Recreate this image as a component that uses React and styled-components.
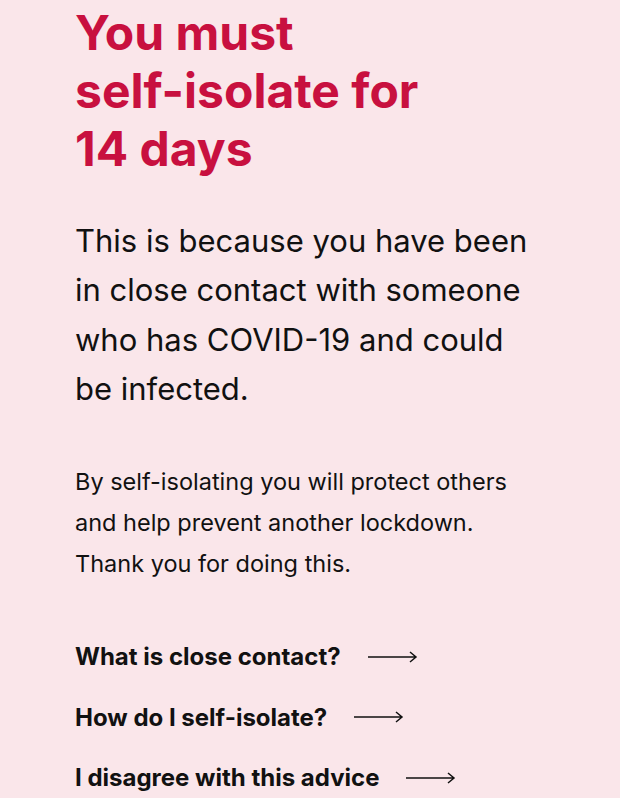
import React from "react";
import styled, { createGlobalStyle } from "styled-components";

const Global = createGlobalStyle`
  html, body { margin: 0; padding: 0; background: #fae6ea; }
  body { font-family: Inter, "Noto Sans", sans-serif; }
`;

const Page = styled.main`
  min-height: 798px;
  box-sizing: border-box;
  padding: 4px 30px 0 75px;
  background: #fae6ea;
  color: #111;
`;

const Title = styled.h1`
  margin: 0;
  font-size: 48px;
  line-height: 58px;
  font-weight: 700;
  color: #c8103f;
`;

const Lead = styled.p`
  margin: 38px 0 0;
  font-size: 31px;
  line-height: 49.3px;
  font-weight: 400;
`;

const Body = styled.p`
  margin: 48px 0 0;
  font-size: 23.5px;
  line-height: 41px;
  font-weight: 400;
`;

const Links = styled.nav`
  display: flex;
  flex-direction: column;
  gap: 19.5px;
  margin-top: 52px;
`;

const LinkRow = styled.a`
  display: flex;
  align-items: center;
  gap: 27px;
  font-size: 24px;
  line-height: 41px;
  font-weight: 700;
  color: #111;
  text-decoration: none;
`;

const Arrow = () => (
  <svg width="50" height="14" viewBox="0 0 50 14" aria-hidden="true">
    <path d="M0 7 H48 M42 2 L48 7 L42 12" fill="none" stroke="#111" strokeWidth="1.5" />
  </svg>
);

const links = ["What is close contact?", "How do I self-isolate?", "I disagree with this advice"];

export default function App() {
  return (
    <>
      <Global />
      <Page>
        <Title>
          You must
          <br />
          self-isolate for
          <br />
          14 days
        </Title>
        <Lead>
          This is because you have been
          <br />
          in close contact with someone
          <br />
          who has COVID-19 and could
          <br />
          be infected.
        </Lead>
        <Body>
          By self-isolating you will protect others
          <br />
          and help prevent another lockdown.
          <br />
          Thank you for doing this.
        </Body>
        <Links>
          {links.map((l) => (
            <LinkRow key={l} href="#">
              {l}
              <Arrow />
            </LinkRow>
          ))}
        </Links>
      </Page>
    </>
  );
}
